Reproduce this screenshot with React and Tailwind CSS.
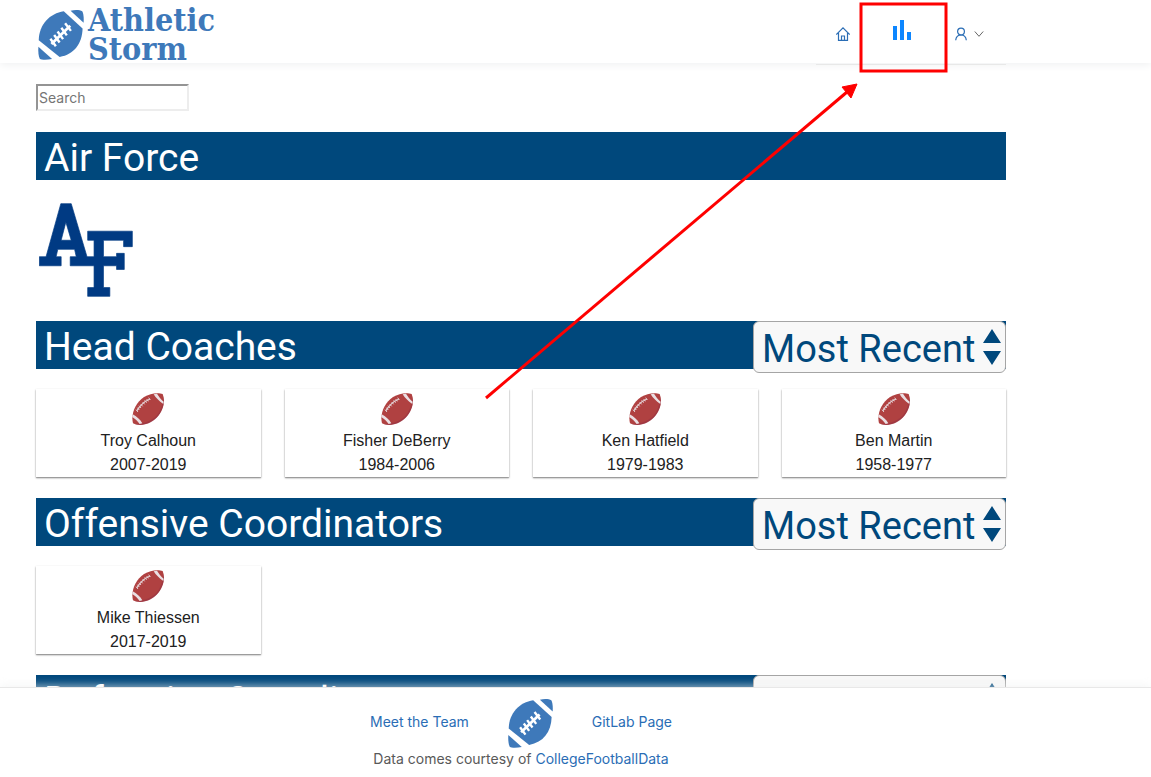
import { useState } from "react";

const sections = [
  {
    id: "head",
    title: "Head Coaches",
    coaches: [
      { name: "Troy Calhoun", years: "2007-2019" },
      { name: "Fisher DeBerry", years: "1984-2006" },
      { name: "Ken Hatfield", years: "1979-1983" },
      { name: "Ben Martin", years: "1958-1977" },
    ],
  },
  {
    id: "offense",
    title: "Offensive Coordinators",
    coaches: [{ name: "Mike Thiessen", years: "2017-2019" }],
  },
  { id: "defense", title: "Defensive Coordinators", coaches: [] },
];

function StormBall({ className }) {
  return (
    <svg className={className} viewBox="0 0 132 146" aria-hidden="true">
      <g fill="#3e79ba">
        <path d="M1 88 C2 42 34 10 74 4 L129 54 C128 98 104 130 62 137 Z" />
        <path d="M94 2 C108 -1 122 0 128 4 C132 11 133 24 132 37 Z" />
        <path d="M0 107 L40 143 C24 146 9 146 4 142 C0 134 -1 120 0 107 Z" />
      </g>
      <g stroke="#fff">
        <path d="M38 99 L93 46" strokeWidth="8" />
        <path
          d="M35 84 L51 106 M46 73 L62 95 M56 63 L72 85 M67 52 L83 74 M78 39 L95 61"
          strokeWidth="7"
        />
      </g>
    </svg>
  );
}

function RedBall() {
  return (
    <svg className="size-8" viewBox="0 0 96 96" aria-hidden="true">
      <path
        d="M3 91 C-4 62 10 30 36 12 C54 0 80 -2 92 3 C101 25 94 52 75 73 C54 95 24 101 3 91 Z"
        fill="#b04141"
      />
      <path
        d="M94 12 C99 31 92 54 74 74 C54 94 26 100 8 93 C35 94 64 84 80 60 C90 43 94 25 94 12 Z"
        fill="#8f2f43"
        opacity="0.5"
      />
      <path d="M65 4 C72 15 81 24 94 33 L95 26 C87 19 80 10 75 2 Z" fill="#eadfe3" />
      <path d="M2 64 C14 71 25 80 31 91 L23 93 C17 85 9 77 1 72 Z" fill="#eadfe3" />
      <g stroke="#e3cfd2" fill="none">
        <path d="M15 53 C24 37 38 25 54 18" strokeWidth="4" />
        <path
          d="M12 50 l6 7 M16 44 l6 7 M21 38 l6 7 M26 33 l6 7 M32 27 l6 7 M38 22 l6 7 M44 18 l5 7 M50 14 l5 7"
          strokeWidth="3"
        />
      </g>
    </svg>
  );
}

function AirForceLogo() {
  return (
    <svg className="h-[94px] w-[94px]" viewBox="0 0 280 280" role="img" aria-label="Air Force">
      <path
        fill="#003a83"
        stroke="#003a83"
        strokeWidth="2"
        fillRule="evenodd"
        d="M65 2 H96 L143 160 H164 V111 H145 V84 H278 V130 H252 V111 H192 V160 H231 V150 H254 V198 H231 V187 H192 V252 H211 V278 H145 V252 H164 V187 H93 V160 H111 L106 138 H56 L51 160 H66 V187 H1 V160 H21 Z M80 57 L66 111 H96 Z"
      />
    </svg>
  );
}

function SortSelect({ id, label }) {
  return (
    <div className="relative h-[52px] w-[253px] shrink-0">
      <label htmlFor={id} className="sr-only">
        {label}
      </label>
      <select
        id={id}
        className="h-full w-full appearance-none rounded-md border border-[#a5a5a5] bg-[#f8f8f8] pt-[3px] pl-2 font-[Roboto,sans-serif] text-[38px] leading-[46px] text-[#00487c] outline-none"
      >
        <option>Most Recent</option>
        <option>Alphabetical</option>
      </select>
      <svg
        className="pointer-events-none absolute top-2 right-1 h-9 w-5"
        viewBox="0 0 20 36"
        fill="#00487c"
        aria-hidden="true"
      >
        <path d="M10 0 L19 14 H1 Z M1 22 H19 L10 36 Z" />
      </svg>
    </div>
  );
}

function CoachCard({ name, years }) {
  return (
    <li className="flex h-[88px] flex-col items-center bg-white pt-1 font-['Liberation_Sans',Arial,sans-serif] text-base leading-6 text-[#212121] shadow-[0_1px_2px_rgba(0,0,0,0.35),0_1px_1px_rgba(0,0,0,0.2)]">
      <RedBall />
      <span className="mt-1">{name}</span>
      <span>{years}</span>
    </li>
  );
}

function Header() {
  return (
    <header className="relative z-10 h-[63px] shrink-0 bg-white pr-[145px] pl-9 shadow-[0_2px_8px_#f0f1f2]">
      <div className="flex h-full justify-between">
        <a
          href="#top"
          className="flex items-start gap-1 pt-[6px] pl-[2px] font-['DejaVu_Serif_Condensed','DejaVu_Serif',serif] text-[32px] leading-[29px] font-bold text-[#3e79ba]"
        >
          <StormBall className="mt-1 h-[50px] w-[46px]" />
          <span>
            Athletic
            <br />
            Storm
          </span>
        </a>
        <nav className="flex h-[65px] w-[190px] items-center border-b border-[#e8e8e8] pt-1 pl-5 text-[#2a6db5]">
          <a href="#home" aria-label="Home">
            <svg className="size-[14px]" viewBox="0 0 14 14" fill="none" stroke="currentColor" strokeWidth="1.2" aria-hidden="true">
              <path d="M0.3 7.5 L7 0.9 L13.7 7.5 M2.5 6 V13.3 H11.5 V6 M5.5 13 V9 H8.5 V13" />
            </svg>
          </a>
          <a href="#stats" aria-label="Statistics" className="ml-[43px] pb-2">
            <svg className="h-5 w-[18px]" viewBox="0 0 18 20" fill="#0d86ff" aria-hidden="true">
              <path d="M0 6 H4 V20 H0 Z M7 0 H11 V20 H7 Z M14 12 H18 V20 H14 Z" />
            </svg>
          </a>
          <button type="button" aria-label="Account" className="ml-11 flex items-center gap-[7px]">
            <svg className="h-[14px] w-3" viewBox="0 0 12 14" fill="none" stroke="currentColor" strokeWidth="1.2" aria-hidden="true">
              <circle cx="6" cy="4.6" r="3.4" />
              <path d="M0.7 13.3 C1 9.8 3 8 6 8 C9 8 11 9.8 11.3 13.3" />
            </svg>
            <svg className="h-[6px] w-[10px]" viewBox="0 0 10 6" fill="none" stroke="#666" aria-hidden="true">
              <path d="M0.8 0.5 L5 5.3 L9.2 0.5" />
            </svg>
          </button>
        </nav>
      </div>
    </header>
  );
}

function Footer() {
  return (
    <footer className="relative z-10 h-[90px] shrink-0 border-t border-[#e8e8e8] bg-white pr-[145px] pl-9 text-sm text-[#595959] shadow-[0_-2px_8px_rgba(240,241,242,0.6)]">
      <div className="mx-auto flex w-[302px] items-center justify-between pt-[11px] text-[#2a6db5]">
        <a href="#team" className="pb-[3px]">
          Meet the Team
        </a>
        <StormBall className="h-[49px] w-[45px]" />
        <a href="#gitlab" className="pb-[3px]">
          GitLab Page
        </a>
      </div>
      <p className="text-center leading-[22px]">
        Data comes courtesy of{" "}
        <a href="#data" className="text-[#2a6db5]">
          CollegeFootballData
        </a>
      </p>
    </footer>
  );
}

function Callout() {
  return (
    <svg className="pointer-events-none absolute top-0 left-0 z-20 h-[410px] w-[960px]" viewBox="0 0 960 410" fill="none" aria-hidden="true">
      <rect x="861" y="4" width="85" height="67" stroke="#fe0000" strokeWidth="3" />
      <path d="M486 398 L847 92" stroke="#fe0000" strokeWidth="3" />
      <path d="M857 84 L851 98 L842 87 Z" fill="#fe0000" stroke="#fe0000" />
    </svg>
  );
}

export default function App() {
  const [query, setQuery] = useState("");
  return (
    <div className="relative flex h-screen flex-col overflow-hidden bg-white font-[Inter,sans-serif]">
      <Header />
      <main className="min-h-0 flex-1 overflow-y-auto pt-[21px] pr-[145px] pl-9 [scrollbar-width:none]">
        <input
          type="text"
          aria-label="Search"
          placeholder="Search"
          value={query}
          onChange={(e) => setQuery(e.target.value)}
          className="block h-[27px] w-[153px] border-2 border-t-[#949494] border-r-[#ededed] border-b-[#ededed] border-l-[#949494] px-px text-sm text-[#333] placeholder:text-[#757575]"
        />
        <h1 className="mt-[21px] h-12 bg-[#00487c] pl-2 font-[Roboto,sans-serif] text-[39px] leading-[52px] text-white">
          Air Force
        </h1>
        <div className="h-[141px] pt-[23px] pl-[3px]">
          <AirForceLogo />
        </div>
        {sections.map((section) => (
          <section key={section.id} className="mb-[21px]">
            <div className="flex h-12 items-start justify-between bg-[#00487c]">
              <h2 className="pl-2 font-[Roboto,sans-serif] text-[39px] leading-[52px] text-white">{section.title}</h2>
              <SortSelect id={section.id} label={"Sort " + section.title} />
            </div>
            <ul className="mt-5 grid grid-cols-4 gap-6">
              {section.coaches.map((coach) => (
                <CoachCard key={coach.name} {...coach} />
              ))}
            </ul>
          </section>
        ))}
      </main>
      <Footer />
      <Callout />
    </div>
  );
}
